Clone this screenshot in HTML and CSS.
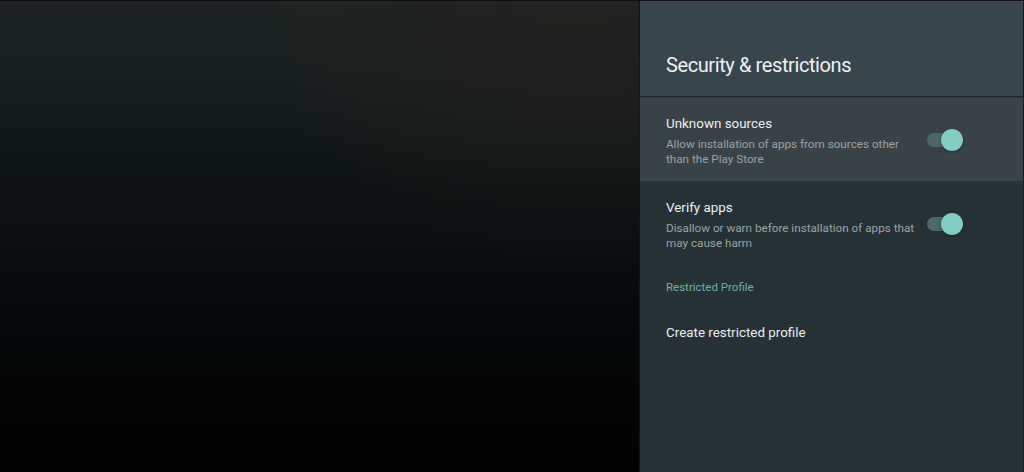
FILE: index.html
```html
<!DOCTYPE html>
<html lang="en">
<head>
  <meta charset="UTF-8" />
  <meta name="viewport" content="width=device-width, initial-scale=1.0"/>
  <title>Security &amp; restrictions</title>
  <link rel="stylesheet" href="styles.css">
</head>
<body>
  <div class="backdrop"></div>

  <div class="panel">
    <div class="panel-header">
      <h1>Security &amp; restrictions</h1>
    </div>

    <div class="item focused">
      <div class="item-text">
        <div class="item-title">Unknown sources</div>
        <div class="item-desc">Allow installation of apps from sources other than the Play Store</div>
      </div>
      <div class="switch on"><span class="knob"></span></div>
    </div>

    <div class="item">
      <div class="item-text">
        <div class="item-title">Verify apps</div>
        <div class="item-desc">Disallow or warn before installation of apps that may cause harm</div>
      </div>
      <div class="switch on"><span class="knob"></span></div>
    </div>

    <div class="category">Restricted Profile</div>

    <div class="item single">
      <div class="item-text">
        <div class="item-title">Create restricted profile</div>
      </div>
    </div>
  </div>
</body>
</html>
```

FILE: styles.css
```css
body {
  margin: 0;
  height: 472px;
  display: flex;
  font-family: Roboto, "Noto Sans", sans-serif;
  background: #000;
  overflow: hidden;
  border-top: 1px solid #0d0f10;
  box-sizing: border-box;
}

.backdrop {
  flex: 1;
  background:
    radial-gradient(ellipse at 90% 0%, rgba(38, 33, 28, 0.6), rgba(38, 33, 28, 0) 40%),
    linear-gradient(to bottom, #1d2324 0%, #131a1b 25%, #080d0f 55%, #030506 80%, #010202 100%);
}

.panel {
  width: 383px;
  background-color: #263136;
  border-left: 1px solid #12181a;
  border-right: 1px solid #171d20;
  display: flex;
  flex-direction: column;
}

.panel-header {
  background-color: #37454d;
  height: 95px;
  padding: 0 26px;
  display: flex;
  align-items: flex-end;
  box-shadow: 0 1px 2px rgba(0,0,0,0.35);
  position: relative;
  z-index: 1;
}

h1 {
  margin: 0 0 19px 0;
  font-size: 20px;
  font-weight: 400;
  color: #eef1f2;
  letter-spacing: -0.4px;
  line-height: 24px;
}

.item {
  display: flex;
  align-items: flex-start;
  padding: 18px 26px 14px 26px;
}

.item.focused {
  background-color: #394247;
  margin-top: 1px;
}

.item-text {
  width: 252px;
}

.item-title {
  font-size: 13.4px;
  line-height: 18px;
  color: #eceff0;
  margin-bottom: 4px;
}

.item-desc {
  font-size: 11.7px;
  line-height: 15px;
  color: #9aa3a7;
}

.switch {
  margin: 18px 0 0 9px;
  width: 33px;
  height: 14px;
  border-radius: 7px;
  background-color: #4a6865;
  position: relative;
}

.switch .knob {
  position: absolute;
  right: -3px;
  top: -4px;
  width: 22px;
  height: 22px;
  border-radius: 50%;
  background-color: #7fcdc3;
  box-shadow: 0 1px 3px rgba(0,0,0,0.4);
}

.category {
  font-size: 11.5px;
  color: #6fb3a3;
  padding: 14px 26px 0 26px;
  line-height: 16px;
}

.item.single {
  padding-top: 29px;
}

.item.single .item-title {
  margin-bottom: 0;
}
```
